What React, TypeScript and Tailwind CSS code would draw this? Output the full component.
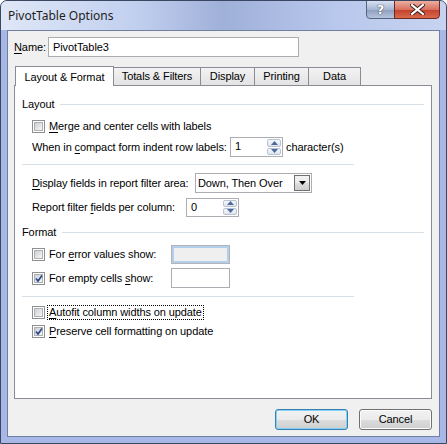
import type { ReactNode } from 'react';

const Mn = ({ children }: { children: ReactNode }) => <span className="underline underline-offset-[2px]">{children}</span>;

const CheckBox = ({ checked }: { checked?: boolean }) => (
  <div className="relative flex h-[13px] w-[13px] shrink-0 items-center justify-center border border-[#8e8f8f] bg-white">
    <div className="h-[9px] w-[9px] border border-[#aeb0b3] bg-[linear-gradient(135deg,#cbcfd5,#f6f6f6)]" />
    {checked && (
      <svg className="absolute left-[1px] top-[1px]" width="10" height="10" viewBox="0 0 10 10">
        <path d="M2 4.5 L4 7 L8 1.5" fill="none" stroke="#2a4a8c" strokeWidth="1.7" />
      </svg>
    )}
  </div>
);

const Spinner = ({ value, width, height }: { value: string; width: number; height: number }) => (
  <div className="flex shrink-0 border border-[#abadb3] bg-white" style={{ width, height }}>
    <div className="flex-1 pl-[4px] leading-[17px]">{value}</div>
    <div className="flex w-[16px] flex-col gap-[1px] p-[1px]">
      <div className="flex flex-1 items-center justify-center rounded-[2px] border border-[#b7c3d5] bg-[linear-gradient(#f6f8fb,#dfe4ec)]">
        <svg width="7" height="4" viewBox="0 0 7 4"><path d="M0 4 L3.5 0 L7 4Z" fill="#4e6a9a" /></svg>
      </div>
      <div className="flex flex-1 items-center justify-center rounded-[2px] border border-[#b7c3d5] bg-[linear-gradient(#f6f8fb,#dfe4ec)]">
        <svg width="7" height="4" viewBox="0 0 7 4"><path d="M0 0 L3.5 4 L7 0Z" fill="#4e6a9a" /></svg>
      </div>
    </div>
  </div>
);

const Tab = ({ label, width, active }: { label: string; width: number; active?: boolean }) =>
  active ? (
    <div className="relative z-10 -mb-px flex h-[20px] items-start justify-center border border-b-0 border-[#898c95] bg-white pt-[2px]" style={{ width }}>
      {label}
    </div>
  ) : (
    <div className="-ml-px flex h-[18px] items-center justify-center border border-b-0 border-[#898c95] bg-[linear-gradient(#f3f3f3,#e3e3e3)]" style={{ width }}>
      {label}
    </div>
  );

export default function App() {
  return (
    <div className="h-[444px] w-[447px] overflow-hidden whitespace-nowrap rounded-t-[7px] border border-[#3b4660] bg-[#a7b8e6] font-['Liberation_Sans',Arial,sans-serif] text-[11px] tracking-[-0.1px] text-black">
      {/* title bar */}
      <div className="relative flex h-[29px] items-center bg-[linear-gradient(90deg,#dfe7f7_0%,#c2d0ef_30%,#9fb0d9_50%,#b8c7ec_75%,#c7d3f0_100%)] pl-[7px]">
        <span className="font-['Noto_Sans',sans-serif] text-[12px] tracking-normal text-[#1e1e1e]">PivotTable Options</span>
        <div className="absolute right-[6px] top-[-1px] flex">
          <div className="flex h-[19px] w-[29px] items-center justify-center rounded-bl-[4px] border border-[#55647f] bg-[linear-gradient(#d8e1f1,#a8b6d2_50%,#8d9dbd_51%,#b5c3dd)]">
            <span className="font-['DejaVu_Sans',sans-serif] text-[13px] font-bold leading-none text-white [text-shadow:0_0_1px_#2c3b58,0_0_1px_#2c3b58]">?</span>
          </div>
          <div className="-ml-px flex h-[19px] w-[46px] items-center justify-center rounded-br-[4px] border border-[#6b2a24] bg-[linear-gradient(#eab0a2,#d8705d_50%,#c4402c_51%,#d9694c)]">
            <svg width="15" height="11" viewBox="0 0 15 11">
              <path d="M2 1 L13 10 M13 1 L2 10" stroke="#3a1a16" strokeWidth="4" strokeLinecap="square" />
              <path d="M2 1 L13 10 M13 1 L2 10" stroke="#ffffff" strokeWidth="2.2" strokeLinecap="square" />
            </svg>
          </div>
        </div>
      </div>

      {/* client area */}
      <div className="mx-[6px] h-[407px] border border-[#6f7f9f] bg-[#f0f0f0] px-[6px] pt-[6px]">
        <div className="flex h-[20px] items-center">
          <span className="w-[34px]"><Mn>N</Mn>ame:</span>
          <div className="h-[20px] w-[251px] border border-[#abadb3] bg-white pl-[4px] leading-[18px]">PivotTable3</div>
        </div>

        <div className="mt-[9px] flex items-end pl-[1px]">
          <Tab label="Layout & Format" width={99} active />
          <Tab label="Totals & Filters" width={88} />
          <Tab label="Display" width={55} />
          <Tab label="Printing" width={55} />
          <Tab label="Data" width={53} />
        </div>

        <div className="h-[314px] w-[418px] border border-[#898c95] bg-white px-[7px]">
          <div className="mt-[9px] flex h-[18px] items-center gap-[6px]">
            <span>Layout</span>
            <div className="h-px flex-1 bg-[#d5dfe5]" />
          </div>
          <div className="mt-[3px] flex h-[20px] items-center gap-[4px] pl-[10px]">
            <CheckBox />
            <span><Mn>M</Mn>erge and center cells with labels</span>
          </div>
          <div className="mt-[1px] flex h-[20px] items-center pl-[10px]">
            <span className="w-[198px] shrink-0">When in <Mn>c</Mn>ompact form indent row labels:</span>
            <Spinner value="1" width={53} height={20} />
            <span className="ml-[3px]">character(s)</span>
          </div>
          <div className="mt-[7px] h-px w-[332px] bg-[#d5dfe5]" />
          <div className="mt-[8px] flex h-[20px] items-center pl-[10px]">
            <span className="w-[163px] shrink-0"><Mn>D</Mn>isplay fields in report filter area:</span>
            <div className="flex h-[20px] w-[117px] border border-[#abadb3] bg-white">
              <span className="flex-1 pl-[2px] leading-[18px]">Down, Then Over</span>
              <div className="m-[1px] flex w-[16px] items-center justify-center border border-[#707070] bg-[linear-gradient(#f2f2f2,#ebebeb_50%,#dddddd_51%,#cfcfcf)]">
                <svg width="7" height="4" viewBox="0 0 7 4"><path d="M0 0 L3.5 4 L7 0Z" fill="#000" /></svg>
              </div>
            </div>
          </div>
          <div className="mt-[4px] flex h-[20px] items-center pl-[10px]">
            <span className="w-[154px] shrink-0">Report filter <Mn>f</Mn>ields per column:</span>
            <Spinner value="0" width={53} height={19} />
          </div>
          <div className="mt-[6px] flex h-[18px] items-center gap-[6px]">
            <span>Format</span>
            <div className="h-px flex-1 bg-[#d5dfe5]" />
          </div>
          <div className="mt-[3px] flex h-[20px] items-center pl-[10px]">
            <div className="flex w-[139px] shrink-0 items-center gap-[4px]">
              <CheckBox />
              <span>For <Mn>e</Mn>rror values show:</span>
            </div>
            <div className="flex h-[19px] w-[59px] items-center justify-center border border-[#b2b4b8] bg-[#b4cfec] p-[2px]">
              <div className="h-full w-full bg-[#efefef]" />
            </div>
          </div>
          <div className="mt-[4px] flex h-[20px] items-center pl-[10px]">
            <div className="flex w-[139px] shrink-0 items-center gap-[4px]">
              <CheckBox checked />
              <span>For empty cells <Mn>s</Mn>how:</span>
            </div>
            <div className="h-[20px] w-[59px] border border-[#abadb3] bg-white" />
          </div>
          <div className="mt-[8px] h-px w-[332px] bg-[#d5dfe5]" />
          <div className="mt-[6px] flex h-[18px] items-center gap-[2px] pl-[10px]">
            <CheckBox />
            <span className="border border-dotted border-black px-[1px] leading-[13px]"><Mn>A</Mn>utofit column widths on update</span>
          </div>
          <div className="mt-[1px] flex h-[18px] items-center gap-[4px] pl-[10px]">
            <CheckBox checked />
            <span><Mn>P</Mn>reserve cell formatting on update</span>
          </div>
        </div>

        <div className="mt-[10px] flex w-[418px] justify-end gap-[11px]">
          <div className="flex h-[21px] w-[73px] items-center justify-center rounded-[3px] border border-[#3c7fb1] bg-[linear-gradient(#f2f2f2,#ebebeb_50%,#dddddd_51%,#cfcfcf)] shadow-[inset_0_0_0_1px_#7ed3f7]">
            OK
          </div>
          <div className="flex h-[21px] w-[73px] items-center justify-center rounded-[3px] border border-[#707070] bg-[linear-gradient(#f2f2f2,#ebebeb_50%,#dddddd_51%,#cfcfcf)] shadow-[inset_0_0_0_1px_#fcfcfc]">
            Cancel
          </div>
        </div>
      </div>
    </div>
  );
}
